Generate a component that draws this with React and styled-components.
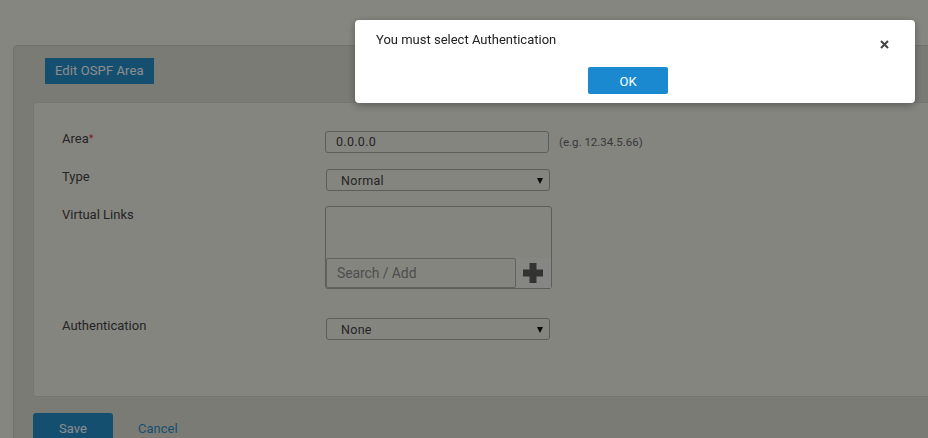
import styled, { createGlobalStyle } from 'styled-components';

const GlobalStyle = createGlobalStyle`
    html, body {
        margin: 0;
        padding: 0;
        background: #f5f5ec;
        font-family: Roboto, "Liberation Sans", Arial, sans-serif;
        overflow: hidden;
    }
`;

// --- Página por trás do diálogo ---

const Page = styled.div`
    height: 438px;
    padding: 45px 0 0 13px;
    box-sizing: border-box;
    overflow: hidden;
`;

const OuterPanel = styled.section`
    width: 960px;
    min-height: 420px;
    background: #e1e1d8;
    border: 1px solid #cdcdc5;
    border-radius: 4px 0 0 0;
    padding: 12px 0 0 19px;
    box-sizing: border-box;
`;

const TabTitle = styled.div`
    display: inline-block;
    margin-left: 12px;
    height: 26px;
    line-height: 26px;
    padding: 0 10px;
    background: #2590cc;
    color: #ffffff;
    font-size: 13px;
    letter-spacing: 0.1px;
`;

const InnerPanel = styled.div`
    margin-top: 18px;
    background: #f2f2e9;
    border: 1px solid #d6d6ce;
    border-right: none;
    border-radius: 3px 0 0 3px;
    padding: 28px 0 56px 28px;
`;

const Row = styled.div`
    display: flex;
    align-items: flex-start;
    margin-bottom: ${p => p.gap || 0}px;
`;

const Label = styled.div`
    width: 263px;
    margin-top: ${p => p.offset || 0}px;
    font-size: 13px;
    line-height: 16px;
    color: #444;
`;

const Required = styled.span`
    color: #d9463f;
    font-size: 11px;
    vertical-align: top;
`;

const TextInput = styled.div`
    width: 224px;
    height: 22px;
    box-sizing: border-box;
    border: 1px solid #a9a9a2;
    border-radius: 3px;
    padding-left: 10px;
    font-size: 12.5px;
    line-height: 20px;
    color: #444;
    background: #f2f2e9;
    letter-spacing: 0.3px;
`;

const Hint = styled.span`
    margin-left: 10px;
    margin-top: 2px;
    font-size: 11.5px;
    line-height: 18px;
    color: #6a6a6a;
`;

const Select = styled.div`
    width: 224px;
    height: 22px;
    box-sizing: border-box;
    border: 1px solid #a9a9a2;
    border-radius: 3px;
    padding: 1px 6px 0 14px;
    display: flex;
    align-items: center;
    justify-content: space-between;
    font-size: 12.5px;
    color: #444;
    background: #f2f2e9;
    margin-left: 1px;
    letter-spacing: 0.3px;
`;

const Arrow = styled.span`
    width: 0;
    height: 0;
    border-left: 3px solid transparent;
    border-right: 3px solid transparent;
    border-top: 6px solid #111;
`;

const LinkBox = styled.div`
    width: 227px;
    height: 83px;
    box-sizing: border-box;
    border: 1px solid #a9a9a2;
    border-radius: 3px;
    display: flex;
    flex-direction: column;
    justify-content: flex-end;
    background: #f2f2e9;
`;

const SearchRow = styled.div`
    display: flex;
    height: 30px;
`;

const SearchInput = styled.div`
    width: 190px;
    box-sizing: border-box;
    border: 1px solid #b2b2ab;
    border-radius: 2px;
    padding-left: 10px;
    font-size: 14px;
    line-height: 28px;
    color: #8e8e8a;
    letter-spacing: -0.1px;
`;

const AddButton = styled.button`
    flex: 1;
    border: none;
    background: #f4f4ee;
    display: flex;
    align-items: center;
    justify-content: center;
    padding: 0 2px 0 0;
`;

const Actions = styled.div`
    display: flex;
    align-items: center;
    margin-top: 16px;
    gap: 25px;
`;

const SaveButton = styled.button`
    width: 80px;
    height: 28px;
    border: none;
    border-radius: 3px 3px 0 0;
    background: #2590cc;
    color: #fff;
    font-family: inherit;
    font-size: 13px;
    padding: 2px 0 0;
`;

const CancelLink = styled.a`
    color: #2f8fc9;
    font-size: 13px;
    text-decoration: none;
    padding-top: 2px;
`;

// --- Diálogo modal ---

const Backdrop = styled.div`
    position: fixed;
    inset: 0;
    background: rgba(0, 0, 0, 0.45);
`;

const Dialog = styled.div`
    position: fixed;
    left: 355px;
    top: 20px;
    width: 560px;
    height: 83px;
    box-sizing: border-box;
    background: #fff;
    border-radius: 4px;
    box-shadow: 0 2px 8px rgba(0, 0, 0, 0.35);
    padding: 12px 21px 0 21px;
`;

const DialogHeader = styled.div`
    display: flex;
    justify-content: space-between;
    align-items: flex-start;
`;

const Message = styled.p`
    margin: 0;
    font-size: 13px;
    line-height: 16px;
    color: #222;
`;

const CloseButton = styled.button`
    border: none;
    background: none;
    padding: 0;
    margin: 8px 5px 0 0;
    display: flex;
`;

const DialogBody = styled.div`
    display: flex;
    justify-content: center;
    margin-top: 18px;
    padding-right: 14px;
`;

const OkButton = styled.button`
    width: 80px;
    height: 27px;
    border: none;
    border-radius: 2px;
    background: #1a89d0;
    color: #fff;
    font-family: inherit;
    font-size: 13px;
    padding: 1px 0 0;
`;

export default function App() {
    return (
        <>
            <GlobalStyle />
            <Page>
                <OuterPanel>
                    <TabTitle>Edit OSPF Area</TabTitle>
                    <InnerPanel>
                        <Row gap={16}>
                            <Label>Area<Required>*</Required></Label>
                            <TextInput>0.0.0.0</TextInput>
                            <Hint>(e.g. 12.34.5.66)</Hint>
                        </Row>
                        <Row gap={15}>
                            <Label>Type</Label>
                            <Select>Normal<Arrow /></Select>
                        </Row>
                        <Row gap={29}>
                            <Label offset={1}>Virtual Links</Label>
                            <LinkBox>
                                <SearchRow>
                                    <SearchInput>Search / Add</SearchInput>
                                    <AddButton>
                                        <svg width="20" height="20" viewBox="0 0 20 20">
                                            <path d="M6.5 0h7v6.5H20v7h-6.5V20h-7v-6.5H0v-7h6.5z" fill="#5e5e5c" />
                                        </svg>
                                    </AddButton>
                                </SearchRow>
                            </LinkBox>
                        </Row>
                        <Row>
                            <Label>Authentication</Label>
                            <Select>None<Arrow /></Select>
                        </Row>
                    </InnerPanel>
                    <Actions>
                        <SaveButton>Save</SaveButton>
                        <CancelLink href="#">Cancel</CancelLink>
                    </Actions>
                </OuterPanel>
            </Page>
            <Backdrop />
            <Dialog>
                <DialogHeader>
                    <Message>You must select Authentication</Message>
                    <CloseButton>
                        <svg width="9" height="9" viewBox="0 0 9 9">
                            <path d="M1 1l7 7M8 1L1 8" stroke="#444" strokeWidth="2" />
                        </svg>
                    </CloseButton>
                </DialogHeader>
                <DialogBody>
                    <OkButton>OK</OkButton>
                </DialogBody>
            </Dialog>
        </>
    );
}
